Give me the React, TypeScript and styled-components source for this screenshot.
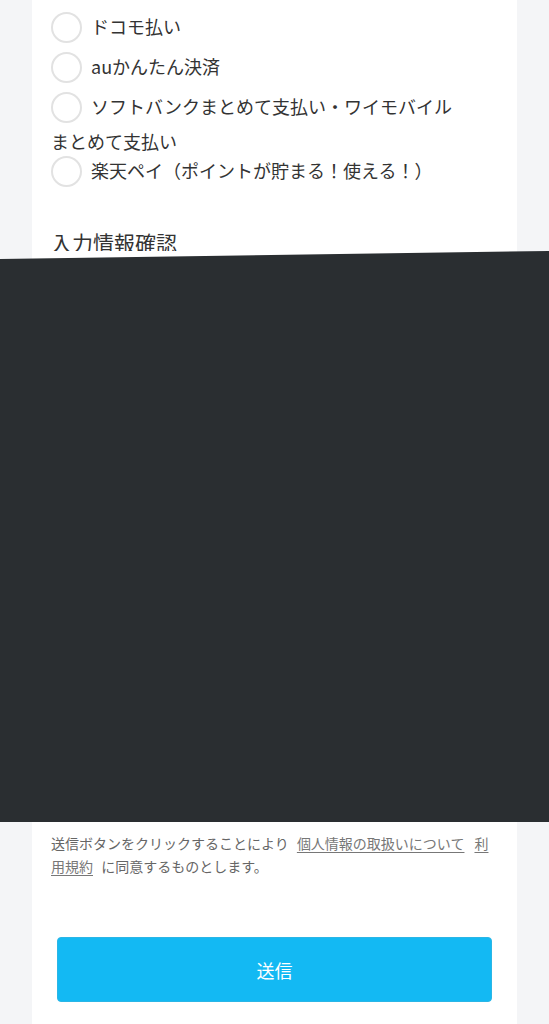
import React from 'react';
import styled, { createGlobalStyle } from 'styled-components';

const GlobalStyle = createGlobalStyle`
  html, body {
    margin: 0;
    padding: 0;
    background: #f4f5f7;
  }
  body {
    font-family: "Noto Sans CJK JP", "Noto Sans", sans-serif;
    color: #333333;
    -webkit-font-smoothing: antialiased;
  }
`;

const Page = styled.div`
  width: 549px;
  overflow: hidden;
`;

// White form card, split into the part above and below the redacted band
const Card = styled.section<{ $top?: boolean }>`
  margin: 0 32px;
  background: #ffffff;
  padding: ${(p) => (p.$top ? '9px 19px 0' : '10px 19px 48px')};
`;

const OptionList = styled.div`
  display: flex;
  flex-direction: column;
`;

const Option = styled.label`
  display: block;
  font-size: 18px;
  line-height: 24px;
  color: #333333;
  cursor: pointer;
`;

const RadioCircle = styled.span`
  display: inline-block;
  box-sizing: border-box;
  width: 31px;
  height: 31px;
  margin: 3px 9px 6px 0;
  border: 2px solid #e2e2e2;
  border-radius: 50%;
  background: #ffffff;
  vertical-align: middle;
`;

const SectionTitle = styled.h2`
  margin: 40px 0 0;
  font-size: 21px;
  font-weight: 400;
  line-height: 18px;
  color: #333333;
`;

// Redacted area (dark band with a slightly slanted top edge)
const Redacted = styled.div`
  position: relative;
  height: 571px;
  background: linear-gradient(
    to right,
    #f4f5f7 32px,
    #ffffff 32px,
    #ffffff 517px,
    #f4f5f7 517px
  );

  &::before {
    content: '';
    position: absolute;
    inset: 0;
    background: #2a2e31;
    clip-path: polygon(0 8px, 100% 0, 100% 100%, 0 100%);
  }
`;

const Notice = styled.p`
  margin: 0;
  font-size: 14px;
  line-height: 23px;
  color: #666666;
`;

const NoticeLink = styled.a`
  margin: 0 5px;
  color: #777777;
  text-decoration: underline;
  text-underline-offset: 3px;
`;

const SubmitButton = styled.button`
  display: block;
  box-sizing: border-box;
  width: calc(100% - 12px);
  height: 65px;
  margin: 59px 6px 0;
  border: 1px solid #2bb6e6;
  border-radius: 4px;
  background: #13b9f3;
  color: #ffffff;
  font-family: inherit;
  font-size: 18px;
  cursor: pointer;
`;

const options = [
  'ドコモ払い',
  'auかんたん決済',
  'ソフトバンクまとめて支払い・ワイモバイル\nまとめて支払い',
  '楽天ペイ（ポイントが貯まる！使える！）',
];

const App = () => {
  return (
    <Page>
      <GlobalStyle />
      <Card $top>
        <OptionList>
          {options.map((label) => {
            const [first, second] = label.split('\n');
            return (
              <Option key={label}>
                <RadioCircle />
                {first}
                {second && (
                  <>
                    <br />
                    {second}
                  </>
                )}
              </Option>
            );
          })}
        </OptionList>
        <SectionTitle>入力情報確認</SectionTitle>
      </Card>

      <Redacted />

      <Card>
        <Notice>
          送信ボタンをクリックすることにより{' '}
          <NoticeLink href="#">個人情報の取扱いについて</NoticeLink>
          <NoticeLink href="#">利用規約</NoticeLink>{' '}
          に同意するものとします。
        </Notice>
        <SubmitButton type="button">送信</SubmitButton>
      </Card>
    </Page>
  );
};

export default App;
